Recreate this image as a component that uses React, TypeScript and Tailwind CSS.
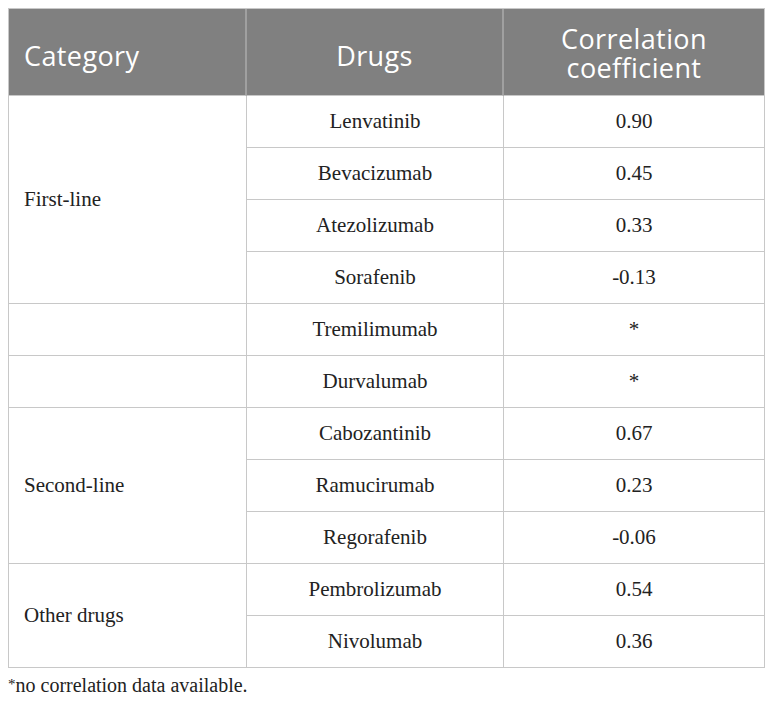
import React from "react";

type Row = { drug: string; r: string; row: string };

const rows: Row[] = [
  { drug: "Lenvatinib", r: "0.90", row: "row-start-2" },
  { drug: "Bevacizumab", r: "0.45", row: "row-start-3" },
  { drug: "Atezolizumab", r: "0.33", row: "row-start-4" },
  { drug: "Sorafenib", r: "-0.13", row: "row-start-5" },
  { drug: "Tremilimumab", r: "*", row: "row-start-6" },
  { drug: "Durvalumab", r: "*", row: "row-start-7" },
  { drug: "Cabozantinib", r: "0.67", row: "row-start-8" },
  { drug: "Ramucirumab", r: "0.23", row: "row-start-9" },
  { drug: "Regorafenib", r: "-0.06", row: "row-start-10" },
  { drug: "Pembrolizumab", r: "0.54", row: "row-start-11" },
  { drug: "Nivolumab", r: "0.36", row: "row-start-12" },
];

const cats: { label: string; row: string }[] = [
  { label: "First-line", row: "row-start-2 row-span-4" },
  { label: "", row: "row-start-6 row-span-1" },
  { label: "", row: "row-start-7 row-span-1" },
  { label: "Second-line", row: "row-start-8 row-span-3" },
  { label: "Other drugs", row: "row-start-11 row-span-2" },
];

export default function App() {
  const cell =
    "border-r border-b border-[#c8c8c8] flex items-center text-[21px] text-[#222] font-['Liberation_Serif',serif]";
  const head =
    "row-start-1 bg-[#808080] border-b border-b-[#c8c8c8] flex items-center text-white text-[27px] leading-[29px] tracking-[0.4px] font-['Open_Sans','Noto_Sans',sans-serif]";
  return (
    <div className="bg-white w-[772px] h-[703px] pt-2 pl-2">
      <div className="grid w-[757px] border-l border-t border-[#c8c8c8] grid-cols-[238px_257px_261px] grid-rows-[87px_repeat(11,52px)]">
        <div className={`${head} col-start-1 border-r-2 border-r-[#a0a0a0] pl-[15px] pt-[6px]`}>
          Category
        </div>
        <div className={`${head} col-start-2 border-r-2 border-r-[#a0a0a0] justify-center pt-[6px]`}>
          Drugs
        </div>
        <div className={`${head} col-start-3 border-r border-r-[#c8c8c8] justify-center text-center pt-[2px]`}>
          <div className="flex flex-col">
            <span>Correlation</span>
            <span>coefficient</span>
          </div>
        </div>

        {cats.map((c, i) => (
          <div key={i} className={`col-start-1 ${c.row} ${cell} pl-[15px]`}>
            {c.label}
          </div>
        ))}

        {rows.map((r) => (
          <React.Fragment key={r.drug}>
            <div className={`col-start-2 ${r.row} ${cell} justify-center`}>{r.drug}</div>
            <div className={`col-start-3 ${r.row} ${cell} justify-center`}>{r.r}</div>
          </React.Fragment>
        ))}
      </div>
      <div className="mt-[5px] text-[20px] leading-[23px] text-[#222] font-['Liberation_Serif',serif]">
        <span className="text-[15px] align-[3px]">*</span>no correlation data available.
      </div>
    </div>
  );
}
